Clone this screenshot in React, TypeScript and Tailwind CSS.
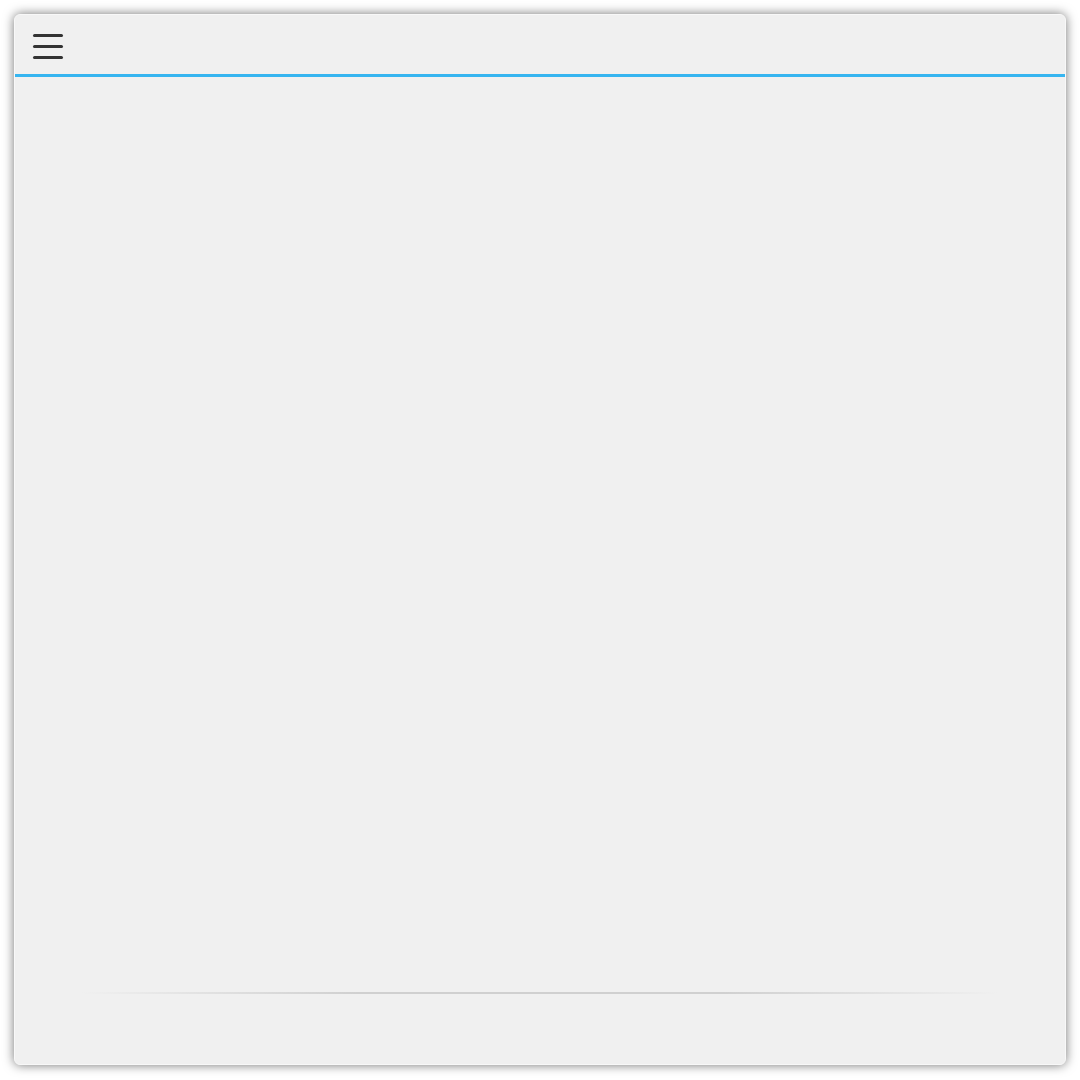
import React from "react";

export default function App() {
  return (
    <div className="w-[1080px] h-[1080px] bg-white p-[14px] font-['Liberation_Sans',sans-serif]">
      <div className="w-[1052px] h-[1051px] bg-[#f0f0f0] rounded-[6px] shadow-[0_0_11px_rgba(0,0,0,0.55)] border border-[#f8f8f8] flex flex-col overflow-hidden">
        <div className="h-[62px] flex items-center pl-[18px] pt-[3px] border-b-[3px] border-[#36b5f0] shrink-0">
          <button className="flex flex-col gap-[8px] w-[30px]" aria-label="menu">
            <span className="block h-[3px] w-[30px] bg-[#333] rounded-[2px]" />
            <span className="block h-[3px] w-[30px] bg-[#333] rounded-[2px]" />
            <span className="block h-[3px] w-[30px] bg-[#333] rounded-[2px]" />
          </button>
        </div>
        <div className="flex-1 flex flex-col justify-end px-[66px] pb-[70px]">
          <div className="h-[2px] w-full bg-[linear-gradient(to_right,rgba(200,200,200,0),rgba(208,208,208,1)_30%,rgba(208,208,208,1)_70%,rgba(200,200,200,0))]" />
        </div>
      </div>
    </div>
  );
}
